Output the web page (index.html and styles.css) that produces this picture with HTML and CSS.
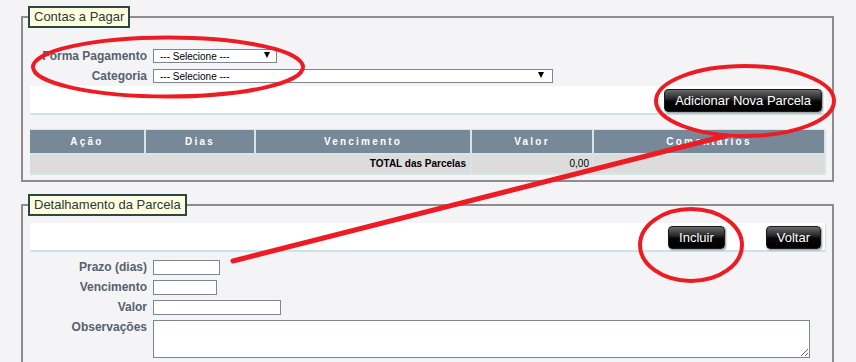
FILE: index.html
```html
<!DOCTYPE html>
<html lang="pt-BR">
<head>
    <meta charset="UTF-8">
    <meta name="viewport" content="width=device-width, initial-scale=1.0">
    <title>Contas a Pagar</title>
    <link rel="stylesheet" href="styles.css">
</head>
<body>

    <div class="page">
        <fieldset class="box">
            <legend>Contas a Pagar</legend>

            <div class="field-row">
                <label class="lbl">Forma Pagamento</label>
                <div class="select sel-short"><span>--- Selecione ---</span><span class="arrow"></span></div>
            </div>
            <div class="field-row">
                <label class="lbl">Categoria</label>
                <div class="select sel-long"><span>--- Selecione ---</span><span class="arrow"></span></div>
            </div>

            <div class="toolbar">
                <button type="button" class="btn">Adicionar Nova Parcela</button>
            </div>

            <table class="grid">
                <colgroup>
                    <col class="c-acao">
                    <col class="c-dias">
                    <col class="c-venc">
                    <col class="c-valor">
                    <col class="c-coment">
                </colgroup>
                <thead>
                    <tr>
                        <th>Ação</th>
                        <th>Dias</th>
                        <th>Vencimento</th>
                        <th>Valor</th>
                        <th>Comentários</th>
                    </tr>
                </thead>
                <tbody>
                    <tr>
                        <td colspan="3" class="num">TOTAL das Parcelas</td>
                        <td class="num">0,00</td>
                        <td></td>
                    </tr>
                </tbody>
            </table>
        </fieldset>

        <fieldset class="box">
            <legend>Detalhamento da Parcela</legend>

            <div class="toolbar toolbar-form">
                <button type="button" class="btn">Incluir</button>
                <button type="button" class="btn">Voltar</button>
            </div>

            <div class="form-row first">
                <label class="lbl" for="prazo">Prazo (dias)</label>
                <input type="text" id="prazo" class="inp inp-prazo">
            </div>
            <div class="form-row">
                <label class="lbl" for="venc">Vencimento</label>
                <input type="text" id="venc" class="inp inp-venc">
            </div>
            <div class="form-row">
                <label class="lbl" for="valor">Valor</label>
                <input type="text" id="valor" class="inp inp-valor">
            </div>
            <div class="form-row">
                <label class="lbl" for="obs">Observações</label>
                <textarea id="obs" class="inp inp-obs"></textarea>
            </div>
        </fieldset>
    </div>

    <!-- red marker annotations drawn over the screen -->
    <svg class="marks" width="856" height="362" viewBox="0 0 856 362">
        <ellipse cx="168" cy="67" rx="135" ry="29.5"></ellipse>
        <ellipse cx="745" cy="101" rx="89" ry="35"></ellipse>
        <ellipse cx="691" cy="245" rx="51" ry="36"></ellipse>
        <line x1="233" y1="261" x2="725" y2="136"></line>
    </svg>

</body>
</html>
```

FILE: styles.css
```css
/* General Styles */
* {
    box-sizing: border-box;
}

html, body {
    overflow: hidden;
}

body {
    margin: 0;
    background-color: #f4f4f7;
    font-family: 'Liberation Sans', Arial, sans-serif;
    color: #333;
}

.page {
    padding: 6px 22px 0 21px;
}

/* Fieldsets */
.box {
    margin: 0 0 12px;
    padding: 0 6px 5px 7px;
    border: 2px solid #8d8d8d;
    min-width: 0;
}

.box legend {
    margin-left: -2px;
    padding: 1px 4px;
    border: 2px solid #2b4743;
    background-color: #ffffe0;
    color: #2b3838;
    font-size: 13px;
    line-height: 16px;
}

/* Labels */
.lbl {
    width: 117px;
    margin-right: 6px;
    flex-shrink: 0;
    text-align: right;
    font-size: 12px;
    font-weight: bold;
    line-height: 15px;
    color: #56616c;
}

/* Fake select boxes */
.field-row {
    display: flex;
    align-items: center;
    height: 20px;
}

.field-row:first-of-type {
    margin-top: 18px;
}

.select {
    display: flex;
    align-items: center;
    justify-content: space-between;
    height: 14px;
    padding: 0 6px;
    border: 1px solid #7a8693;
    background-color: #fff;
    color: #000;
    font-size: 10px;
}

.sel-short { width: 124px; }
.sel-long  { width: 400px; padding-right: 8px; }

.arrow {
    width: 0;
    height: 0;
    margin-top: -2px;
    border-left: 3px solid transparent;
    border-right: 3px solid transparent;
    border-top: 6px solid #000;
}

/* Button bars */
.toolbar {
    display: flex;
    justify-content: flex-end;
    gap: 41px;
    height: 29px;
    padding: 3px 4px 0 0;
    background-color: #fff;
    border-bottom: 2px solid #cfe3e3;
}

.toolbar-form {
    margin-top: 7px;
    border-right: 1px solid #cfe3e3;
}

.btn {
    height: 23px;
    padding: 0 10px;
    border: 1px solid #1a1a1a;
    border-radius: 4px;
    background: linear-gradient(to bottom, #6a6a6a 0%, #2a2a2a 40%, #050505 55%, #000 100%);
    box-shadow: 1px 1px 2px rgba(0, 0, 0, 0.45);
    color: #fff;
    font-family: 'Liberation Sans', Arial, sans-serif;
    font-size: 13px;
    line-height: 20px;
    cursor: pointer;
}

/* Parcelas table */
.grid {
    width: 796px;
    margin-top: 14px;
    table-layout: fixed;
    border-collapse: separate;
    border-spacing: 0;
    font-size: 10px;
}

.c-acao   { width: 116px; }
.c-dias   { width: 110px; }
.c-venc   { width: 216px; }
.c-valor  { width: 122px; }
.c-coment { width: 232px; }

.grid th {
    padding: 0;
    line-height: 23px;
    background-color: #778899;
    color: #fff;
    font-weight: bold;
    letter-spacing: 2.2px;
    border-top: 1px solid #d6e6e6;
    border-right: 2px solid #d6e6e6;
    border-bottom: 2px solid #d6e6e6;
}

.grid td {
    padding: 0 4px;
    line-height: 18px;
    background-color: #dcdcdc;
    color: #000;
    border-right: 2px solid #d6e6e6;
    border-bottom: 2px solid #d6e6e6;
}

.grid td.num {
    text-align: right;
    font-weight: bold;
}

.grid td.num + td.num {
    font-weight: normal;
    padding-right: 3px;
}

/* Detail form */
.form-row {
    display: flex;
    align-items: flex-start;
    margin-bottom: 5px;
}

.form-row.first {
    margin-top: 8px;
}

.inp {
    height: 15px;
    padding: 0 2px;
    border: 1px solid #7a8693;
    background-color: #fff;
    font-family: 'Liberation Sans', Arial, sans-serif;
    font-size: 11px;
}

.inp-prazo { width: 67px; }
.inp-venc  { width: 64px; }
.inp-valor { width: 128px; }

.inp-obs {
    width: 657px;
    height: 38px;
    resize: both;
}

/* Marker annotations */
.marks {
    position: absolute;
    top: 0;
    left: 0;
    pointer-events: none;
}

.marks ellipse,
.marks line {
    fill: none;
    stroke: #ed1c24;
    stroke-width: 4;
    stroke-linecap: round;
}

.marks line {
    stroke-width: 5;
}
```
